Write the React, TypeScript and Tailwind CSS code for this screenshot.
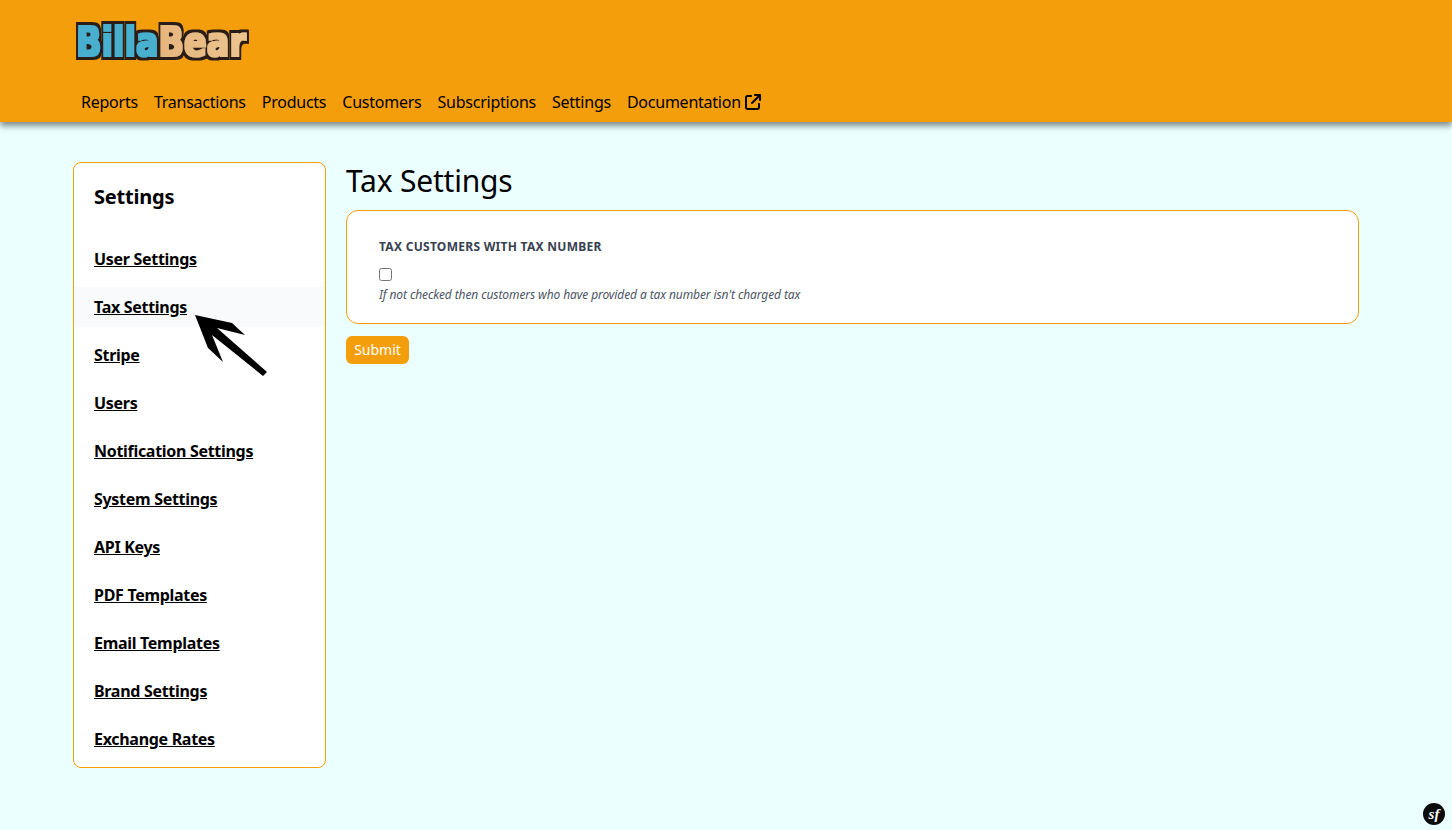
import React from "react";
import { FaArrowUpRightFromSquare } from "react-icons/fa6";

const nav = ["Reports", "Transactions", "Products", "Customers", "Subscriptions", "Settings"];
const items = ["User Settings", "Tax Settings", "Stripe", "Users", "Notification Settings", "System Settings", "API Keys", "PDF Templates", "Email Templates", "Brand Settings", "Exchange Rates"];

function Logo() {
  return (
    <svg width="180" height="44" viewBox="0 0 180 44" className="block overflow-visible">
      <defs>
        <linearGradient id="o" x1="0" y1="0" x2="1" y2="0">
          <stop offset="0" stopColor="#e0a66e" />
          <stop offset="1" stopColor="#ecc48e" />
        </linearGradient>
        <filter id="chunky" x="-5%" y="-20%" width="110%" height="140%">
          <feMorphology in="SourceGraphic" operator="dilate" radius="0.5" result="fat" />
          <feMorphology in="SourceAlpha" operator="dilate" radius="3" result="wide" />
          <feFlood floodColor="#2a1a12" result="ink" />
          <feComposite in="ink" in2="wide" operator="in" result="outline" />
          <feMerge>
            <feMergeNode in="outline" />
            <feMergeNode in="fat" />
          </feMerge>
        </filter>
      </defs>
      <text
        transform="translate(4 36) scale(1 1.2)"
        fontFamily="'DejaVu Sans', sans-serif"
        fontWeight="700"
        fontSize="33.5"
        filter="url(#chunky)"
      >
        <tspan fill="#4aafcf">Billa</tspan>
        <tspan fill="url(#o)">Bear</tspan>
      </text>
    </svg>
  );
}

export default function App() {
  return (
    <div className="relative min-h-[830px] bg-[#ebffff] font-['Noto_Sans',sans-serif] text-black overflow-hidden">
      <header className="h-[122px] bg-[#f59e0b] shadow-[0_4px_6px_rgba(0,0,0,0.45)] pl-[72px] pt-[20px]">
        <Logo />
        <nav className="flex gap-4 mt-[26px] pl-[9px] text-[16px] leading-6">
          {nav.map((n) => (
            <span key={n} className="tracking-[-0.24px]">{n}</span>
          ))}
          <span className="flex items-center gap-1 tracking-[-0.24px]">
            Documentation
            <FaArrowUpRightFromSquare className="w-4 h-4" />
          </span>
        </nav>
      </header>

      <div className="flex gap-5 pl-[73px] pt-10">
        <aside className="w-[253px] h-[606px] bg-white border border-[#f59e0b] rounded-lg pt-[20px]">
          <h2 className="px-5 text-[20px] leading-7 font-bold tracking-[-0.2px]">Settings</h2>
          <ul className="mt-[28px] flex flex-col gap-2">
            {items.map((i) => (
              <li key={i} className={`h-10 px-5 flex items-center text-[16px] font-bold underline tracking-[-0.3px] ${i === "Tax Settings" ? "bg-[#f8fafc]" : ""}`}>
                {i}
              </li>
            ))}
          </ul>
        </aside>

        <main className="w-[1013px]">
          <h1 className="text-[30px] leading-9 mt-[1px] tracking-[-0.2px]">Tax Settings</h1>
          <section className="mt-[11px] h-[114px] bg-white border border-[#f59e0b] rounded-xl px-8 pt-[26px]">
            <div className="text-[12px] leading-5 font-bold uppercase text-[#374151] tracking-[0.28px]">Tax customers with tax number</div>
            <input type="checkbox" className="block mt-[11px] w-[13px] h-[13px] appearance-auto m-0" />
            <p className="mt-[6px] text-[12px] leading-4 italic text-[#4b5563] tracking-[-0.1px]">If not checked then customers who have provided a tax number isn't charged tax</p>
          </section>
          <button className="mt-3 h-7 w-[63px] bg-[#f59e0b] text-white text-[14px] rounded-md pb-[2px]">Submit</button>
        </main>
      </div>

      <svg className="absolute left-0 top-0 pointer-events-none" width="300" height="400" viewBox="0 0 300 400">
        <polygon fill="#000" points="195,315 232,323 245,335 217,328 267,372 263,376 212,335 223,362 208,348" />
      </svg>

      <div className="absolute left-[1423px] top-[803px] w-[22px] h-[22px] rounded-full bg-[#0b0b0b] flex items-center justify-center text-white text-[15px] italic font-['Liberation_Serif',serif] font-bold leading-none">sf</div>
    </div>
  );
}
